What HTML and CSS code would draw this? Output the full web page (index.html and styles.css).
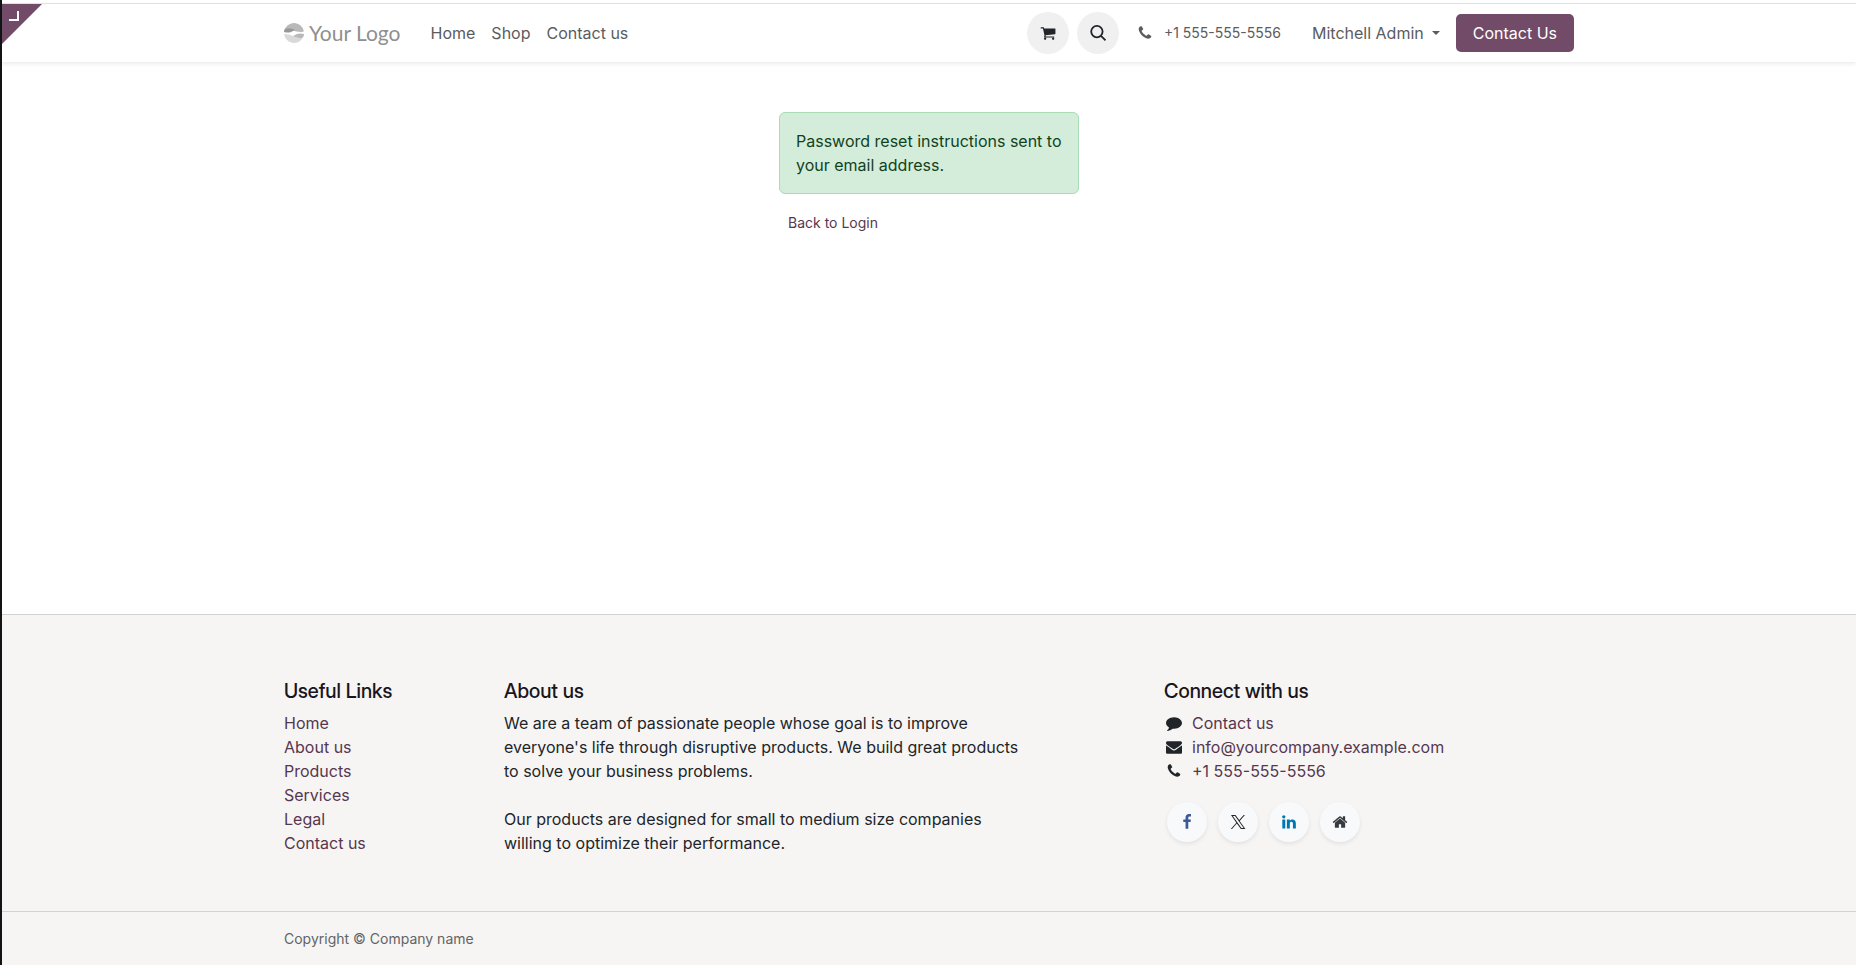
FILE: index.html
```html
<!DOCTYPE html>
<html lang="en">
<head>
<meta charset="UTF-8">
<meta name="viewport" content="width=device-width, initial-scale=1.0">
<title>Reset Password | Your Logo</title>
<link rel="stylesheet" href="styles.css">
</head>
<body>

<a class="editor-corner" href="#" aria-label="Back to edit mode"><span class="corner-mark"></span></a>

<header class="site-header">
  <div class="container header-row">
    <a class="logo" href="#">
      <svg class="logo-mark" viewBox="0 0 20 20" aria-hidden="true">
        <path fill="#b9b9b9" d="M.2 8A10 10 0 0 1 19.8 8Q20 9 17 9Q12 9 8 7Q4 5 .2 8z"/>
        <path fill="#989898" d="M0 9Q0 7 1 6Q6 4 11 7L7 9Q4 10 0 9z"/>
        <path fill="#d9d9d9" d="M.1 11Q5 11 9 13Q14 16 19 14.400A10 10 0 0 1 .1 11z"/>
        <path fill="#b9b9b9" d="M9 13L13 11Q16 10 20 11Q20 13 19 14.400Q14 16 9 13z"/>
      </svg>
      <span>Your Logo</span>
    </a>
    <nav class="main-nav">
      <a href="#">Home</a>
      <a href="#">Shop</a>
      <a href="#">Contact us</a>
    </nav>
    <div class="header-tools">
      <a class="round-btn" href="#" aria-label="Cart">
        <svg class="icon" viewBox="0 0 1792 1792"><path d="M704 1536q0 52-38 90t-90 38-90-38-38-90 38-90 90-38 90 38 38 90zm896 0q0 52-38 90t-90 38-90-38-38-90 38-90 90-38 90 38 38 90zm128-1088v512q0 24-16.500 42.500t-40.500 21.500l-1044 122q13 60 13 70 0 16-24 64h920q26 0 45 19t19 45-19 45-45 19h-1024q-26 0-45-19t-19-45q0-11 8-31.500t16-36 21.500-40 15.500-29.500l-177-823h-204q-26 0-45-19t-19-45 19-45 45-19h256q16 0 28.500 6.500t19.500 15.500 13 24.500 8 26 5.500 29.500 4.500 26h1201q26 0 45 19t19 45z"/></svg>
      </a>
      <button class="round-btn" type="button" aria-label="Search">
        <svg class="icon" viewBox="0 0 16 16"><path fill="none" stroke="currentColor" stroke-width="1.800" d="M12.600 6.600a5.700 5.700 0 1 1-11.400 0a5.700 5.700 0 0 1 11.400 0zM10.700 10.700L15.500 15.300"/></svg>
      </button>
      <a class="header-phone" href="tel:+15555555556">
        <svg class="icon" viewBox="0 0 1792 1792"><path d="M1600 1240q0 27-10 70.500t-21 68.500q-21 50-122 106-94 51-186 51-27 0-53-3.500t-57.500-12.500-47-14.500-55.500-20.500-49-18q-98-35-175-83-127-79-264-216t-216-264q-48-77-83-175-3-9-18-49t-20.500-55.500-14.500-47-12.500-57.500-3.500-53q0-92 51-186 56-101 106-122 25-11 68.500-21t70.500-10q14 0 21 3 18 6 53 76 11 19 30 54t35 63.500 31 53.500q3 4 17.500 25t21.500 35.500 7 28.500q0 20-28.500 50t-62 55-62 53-28.500 46q0 9 5 22.500t8.500 20.500 14 24 11.500 19q76 137 174 235t235 174q2 1 19 11.500t24 14 20.500 8.500 22.500 5q18 0 46-28.500t53-62 55-62 50-28.500q14 0 28.500 7t35.500 21.500 25 17.500q25 15 53.500 31t63.500 35 54 30q70 35 76 53 3 7 3 21z"/></svg>
        <span>+1 555-555-5556</span>
      </a>
      <button class="user-menu" type="button">Mitchell Admin</button>
      <a class="btn-primary" href="#">Contact Us</a>
    </div>
  </div>
</header>

<main>
  <div class="reset-box">
    <p class="alert-success" role="status">Password reset instructions sent to your email address.</p>
    <a class="back-link" href="#">Back to Login</a>
  </div>
</main>

<footer class="site-footer">
  <div class="container footer-grid">
    <section class="links-col">
      <h5>Useful Links</h5>
      <ul>
        <li><a href="#">Home</a></li>
        <li><a href="#">About us</a></li>
        <li><a href="#">Products</a></li>
        <li><a href="#">Services</a></li>
        <li><a href="#">Legal</a></li>
        <li><a href="#">Contact us</a></li>
      </ul>
    </section>
    <section class="about-col">
      <h5>About us</h5>
      <p>We are a team of passionate people whose goal is to improve everyone's life through disruptive products. We build great products to solve your business problems.</p>
      <p>Our products are designed for small to medium size companies willing to optimize their performance.</p>
    </section>
    <section class="connect-col">
      <h5>Connect with us</h5>
      <ul class="contact-list">
        <li>
          <svg class="icon" viewBox="0 0 1792 1792"><path d="M1792 896q0 174-120 321.500t-326 233-450 85.500q-70 0-145-8-198 175-460 242-49 14-114 22-17 2-30.500-9t-17.500-29v-1q-3-4-.5-12t2-10 4.500-9.500l6-9 7-8.500 8-9q7-8 31-34.500t34.500-38 31-39.500 32.500-51 27-59 26-76q-157-89-247.500-220t-90.500-281q0-130 71-248.500t191-204.500 286-136.500 348-50.500q244 0 450 85.500t326 233 120 321.500z"/></svg>
          <a href="#">Contact us</a>
        </li>
        <li>
          <svg class="icon" viewBox="0 0 1792 1792"><path d="M1792 710v794q0 66-47 113t-113 47h-1472q-66 0-113-47t-47-113v-794q44 49 101 87 362 246 497 345 57 42 92.500 65.500t94.500 48 110 24.500h2q51 0 110-24.500t94.500-48 92.500-65.500q170-123 498-345 57-39 100-87zm0-294q0 79-49 151t-122 123q-376 261-468 325-10 7-42.500 31t-54 38.500-52 32.500-57.500 27-50 9h-2q-23 0-50-9t-57.500-27-52-32.500-54-38.500-42.500-31q-91-64-262-182.500t-205-142.500q-62-42-117-115.500t-55-136.500q0-78 41.500-130t118.500-52h1472q65 0 112.500 47t47.500 113z"/></svg>
          <a href="mailto:info@yourcompany.example.com">info@yourcompany.example.com</a>
        </li>
        <li>
          <svg class="icon" viewBox="0 0 1792 1792"><path d="M1600 1240q0 27-10 70.500t-21 68.500q-21 50-122 106-94 51-186 51-27 0-53-3.500t-57.500-12.500-47-14.500-55.500-20.500-49-18q-98-35-175-83-127-79-264-216t-216-264q-48-77-83-175-3-9-18-49t-20.500-55.500-14.500-47-12.500-57.500-3.500-53q0-92 51-186 56-101 106-122 25-11 68.500-21t70.500-10q14 0 21 3 18 6 53 76 11 19 30 54t35 63.500 31 53.500q3 4 17.500 25t21.500 35.500 7 28.500q0 20-28.500 50t-62 55-62 53-28.500 46q0 9 5 22.500t8.500 20.500 14 24 11.500 19q76 137 174 235t235 174q2 1 19 11.500t24 14 20.500 8.500 22.500 5q18 0 46-28.500t53-62 55-62 50-28.500q14 0 28.500 7t35.500 21.500 25 17.500q25 15 53.500 31t63.500 35 54 30q70 35 76 53 3 7 3 21z"/></svg>
          <a href="tel:+15555555556">+1 555-555-5556</a>
        </li>
      </ul>
      <div class="social">
        <a class="facebook" href="#" aria-label="Facebook"><svg class="icon" viewBox="0 0 1792 1792"><path d="M1343 12v264h-157q-86 0-116 36t-30 108v189h293l-39 296h-254v759h-306v-759h-255v-296h255v-218q0-186 104-288.500t277-102.500q147 0 228 12z"/></svg></a>
        <a class="twitter" href="#" aria-label="X"><svg class="icon" viewBox="0 0 16 16"><path fill-rule="evenodd" d="M1 1h4.500l3.700 5.100L13.700 1h1.200L9.700 7l5.700 8h-4.500L6.800 9.500 2 15H.8l5.500-6.300zM2.800 1.900l8.600 12.200h2.200L5 1.900z"/></svg></a>
        <a class="linkedin" href="#" aria-label="LinkedIn"><svg class="icon" viewBox="0 0 1792 1792"><path d="M477 625v991h-330v-991h330zm21-306q1 73-50.500 122t-135.500 49h-2q-82 0-132-49t-50-122q0-74 51.500-122.500t134.500-48.500 133 48.500 51 122.500zm1166 729v568h-329v-530q0-105-40.500-164.500t-126.500-59.500q-63 0-105.500 34.500t-63.500 85.500q-11 30-11 81v553h-329q2-399 2-647t-1-296l-1-48h329v144h-2q20-32 41-56t56.500-52 87-43.500 114.500-15.500q171 0 275 113.500t104 332.500z"/></svg></a>
        <a class="home" href="#" aria-label="Home"><svg class="icon" viewBox="0 0 1792 1792"><path d="M1472 992v480q0 26-19 45t-45 19h-384v-384h-256v384h-384q-26 0-45-19t-19-45v-480q0-1 .5-3t.5-3l575-474 575 474q1 2 1 6zm223-69l-62 74q-8 9-21 11h-3q-13 0-21-7l-692-577-692 577q-12 8-24 7-13-2-21-11l-62-74q-8-10-7-23.500t11-21.500l719-599q32-26 76-26t76 26l244 204v-195q0-14 9-23t23-9h192q14 0 23 9t9 23v408l219 182q10 8 11 21.500t-7 23.500z"/></svg></a>
      </div>
    </section>
  </div>
  <div class="copyright">
    <div class="container">Copyright © Company name</div>
  </div>
</footer>

</body>
</html>
```

FILE: styles.css
```css
* {
  box-sizing: border-box;
}

body {
  margin: 0;
  min-height: 100vh;
  padding-top: 3px;
  border-left: 2px solid #111315;
  display: flex;
  flex-direction: column;
  position: relative;
  background-color: #ffffff;
  color: #212529;
  font-family: Inter, "Liberation Sans", sans-serif;
  font-size: 16px;
  line-height: 24px;
}

a {
  color: #57374f;
  text-decoration: none;
}

button {
  border: none;
  padding: 0;
  background: none;
  color: inherit;
  font: inherit;
  cursor: pointer;
}

h5, p, ul {
  margin: 0;
  padding: 0;
}

ul {
  list-style: none;
}

.icon {
  width: 16px;
  height: 16px;
  fill: currentColor;
  flex: none;
}

.container {
  width: 100%;
  max-width: 1320px;
  margin: 0 auto;
  padding: 0 15px;
}

/* Corner handle */
.editor-corner {
  position: absolute;
  top: 4px;
  left: 0;
  width: 40px;
  height: 40px;
  background-color: #714b67;
  clip-path: polygon(0 0, 100% 0, 0 100%);
}

.corner-mark {
  display: block;
  width: 10px;
  height: 10px;
  margin: 7px;
  border-right: 2px solid #ffffff;
  border-bottom: 2px solid #ffffff;
}

/* Header */
.site-header {
  border-top: 1px solid #dee2e6;
  box-shadow: 0 2px 4px rgba(0, 0, 0, 0.08);
}

.header-row {
  display: flex;
  align-items: center;
  height: 58px;
}

.logo {
  display: flex;
  align-items: center;
  gap: 5px;
  margin-right: 30px;
  color: #8f8f8f;
  font-family: Lato, sans-serif;
  font-size: 21px;
}

.logo-mark {
  width: 20px;
  height: 20px;
}

.main-nav {
  display: flex;
  gap: 16px;
}

.main-nav a, .header-phone, .user-menu {
  color: #5a5c5e;
}

.header-tools {
  display: flex;
  align-items: center;
  margin-left: auto;
}

.round-btn {
  display: flex;
  align-items: center;
  justify-content: center;
  width: 42px;
  height: 42px;
  margin-right: 8px;
  border-radius: 50%;
  background-color: #f0f0f0;
  color: #212529;
}

.header-phone {
  display: flex;
  align-items: center;
  gap: 11px;
  margin: 0 31px 0 10px;
  font-size: 14px;
}

.user-menu {
  display: flex;
  align-items: center;
  gap: 8px;
  margin-right: 16px;
}

.user-menu::after {
  content: "";
  border-top: 4px solid;
  border-left: 4px solid transparent;
  border-right: 4px solid transparent;
}

.btn-primary {
  padding: 7px 17px;
  border-radius: 5px;
  background-color: #714b67;
  color: #ffffff;
}

/* Message */
main {
  flex: 1;
  padding: 50px 16px;
}

.reset-box {
  max-width: 300px;
  margin: 0 auto;
}

.alert-success {
  padding: 16px;
  border: 1px solid #a9dbb5;
  border-radius: 6px;
  background-color: #d4edda;
  color: #11421d;
}

.back-link {
  display: inline-block;
  margin-top: 17px;
  padding: 0 9px;
  font-size: 14px;
}

/* Footer */
.site-footer {
  border-top: 1px solid #d2d2d2;
  background-color: #f6f5f4;
}

.footer-grid {
  display: grid;
  grid-template-columns: repeat(12, 1fr);
  column-gap: 30px;
  padding-top: 64px;
  padding-bottom: 56px;
}

.links-col {
  grid-column: span 2;
}

.about-col {
  grid-column: span 5;
}

.connect-col {
  grid-column: 9 / span 4;
}

h5 {
  margin-bottom: 8px;
  color: #1a151a;
  font-family: "Inter Display", Inter, "Liberation Sans", sans-serif;
  font-size: 20px;
  font-weight: 500;
  line-height: 24px;
}

.about-col p + p {
  margin-top: 24px;
}

.contact-list li {
  display: flex;
  align-items: center;
  gap: 10px;
  padding-left: 2px;
}

.social {
  display: flex;
  gap: 11px;
  margin-top: 19px;
  padding-left: 3px;
}

.social a {
  display: flex;
  align-items: center;
  justify-content: center;
  width: 40px;
  height: 40px;
  border-radius: 50%;
  background-color: #f8f9fa;
  box-shadow: 0 2px 4px rgba(0, 0, 0, 0.08);
}

.social .facebook {
  color: #3b5998;
}

.social .twitter {
  color: #212529;
}

.social .linkedin {
  color: #0077b5;
}

.social .home {
  color: #343a40;
}

.copyright {
  padding: 15px 0 14px;
  border-top: 1px solid #d2d2d2;
  color: #626466;
  font-size: 14px;
}
```
